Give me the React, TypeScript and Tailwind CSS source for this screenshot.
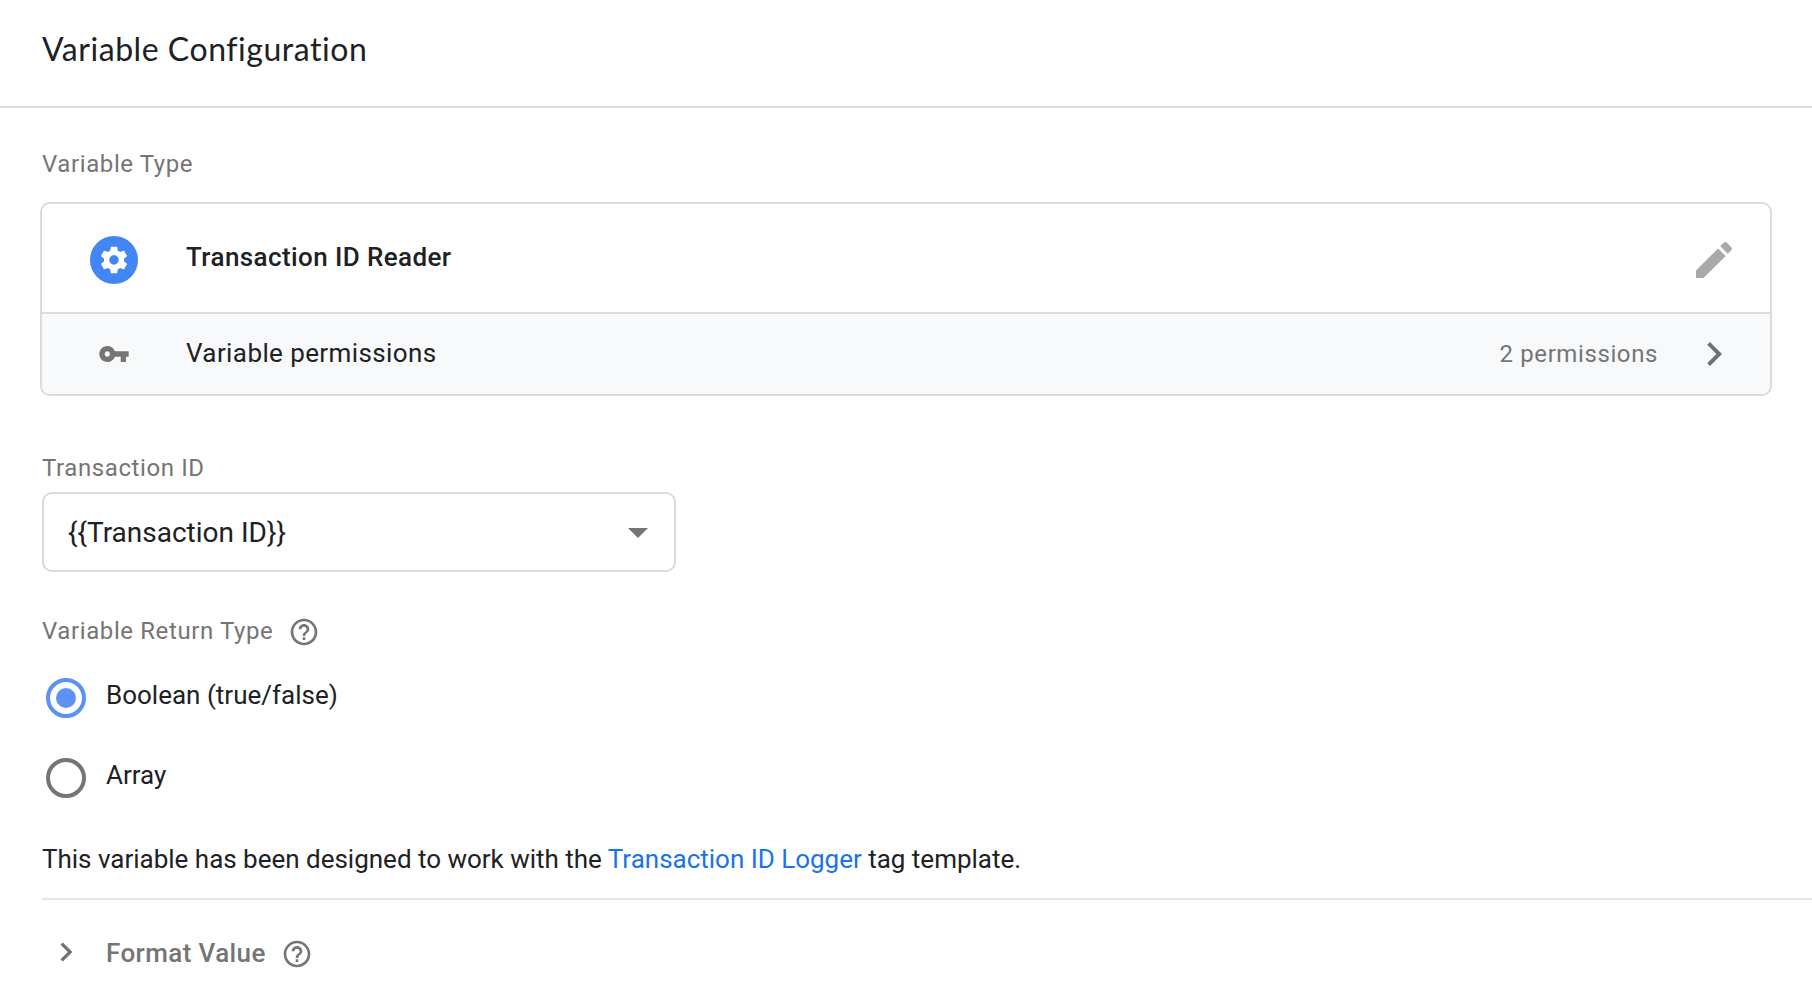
import React from "react";

function Help({ className }: { className: string }) {
  return (
    <svg viewBox="0 0 24 24" className={`h-8 w-8 shrink-0 fill-[#757575] ${className}`}>
      <path d="M11 18h2v-2h-2v2zm1-16C6.480 2 2 6.480 2 12s4.480 10 10 10 10-4.480 10-10S17.520 2 12 2zm0 18c-4.410 0-8-3.590-8-8s3.590-8 8-8 8 3.590 8 8-3.590 8-8 8zm0-14c-2.210 0-4 1.790-4 4h2c0-1.100.9-2 2-2s2 .9 2 2c0 2-3 1.750-3 5h2c0-2.250 3-2.500 3-5 0-2.210-1.790-4-4-4z" />
    </svg>
  );
}

function Chevron({ className }: { className: string }) {
  return (
    <svg viewBox="0 0 24 24" className={`shrink-0 fill-[#6f7072] ${className}`}>
      <path d="M8.590 16.590 13.170 12 8.590 7.410 10 6l6 6-6 6z" />
    </svg>
  );
}

export default function App() {
  return (
    <div className="flex h-[1008px] w-full flex-col overflow-hidden bg-white font-['Roboto',sans-serif] text-[26px] text-[#202124]">
      <header className="flex h-[108px] shrink-0 items-center border-b-2 border-[#dadada] pb-2 pl-[42px]">
        <h1 className="font-['Lato',sans-serif] text-[32px] leading-10 tracking-[0.54px]">Variable Configuration</h1>
      </header>
      <main className="flex flex-col pl-[42px]">
        <div className="mt-[41px] h-[30px] text-2xl leading-[30px] tracking-[0.6px] text-[#757575]">Variable Type</div>
        <section className="-ml-[2px] mt-[23px] mr-10 h-[194px] overflow-hidden rounded-[10px] border-2 border-[#d9dcdf]">
          <div className="flex h-[108px] items-center pl-12 pr-8 pt-1">
            <span className="flex h-12 w-12 items-center justify-center rounded-full bg-[#4285f4]">
              <svg viewBox="0 0 24 24" className="h-8 w-8 fill-white">
                <path d="M19.43 12.98c.04-.32.07-.64.07-.98s-.03-.66-.07-.98l2.11-1.65c.19-.15.24-.42.12-.64l-2-3.46c-.12-.22-.39-.3-.61-.22l-2.49 1c-.52-.4-1.08-.73-1.69-.98l-.38-2.65C14.46 2.18 14.25 2 14 2h-4c-.25 0-.46.18-.49.42l-.38 2.65c-.61.25-1.17.59-1.69.98l-2.49-1c-.23-.09-.49 0-.61.22l-2 3.46c-.13.22-.07.49.12.64l2.11 1.65c-.04.32-.07.65-.07.98s.03.66.07.98l-2.11 1.65c-.19.15-.24.42-.12.64l2 3.46c.12.22.39.3.61.22l2.49-1c.52.4 1.08.73 1.69.98l.38 2.65c.03.24.24.42.49.42h4c.25 0 .46-.18.49-.42l.38-2.65c.61-.25 1.17-.59 1.69-.98l2.49 1c.23.09.49 0 .61-.22l2-3.46c.12-.22.07-.49-.12-.64l-2.11-1.65zM12 15.5c-1.93 0-3.5-1.57-3.5-3.5s1.57-3.5 3.5-3.5 3.5 1.57 3.5 3.5-1.57 3.5-3.5 3.5z" />
              </svg>
            </span>
            <span className="ml-12 pb-1.5 font-medium tracking-[0.4px]">Transaction ID Reader</span>
            <svg viewBox="0 0 24 24" className="ml-auto h-12 w-12 fill-[#a9a9a9]">
              <path d="M3 17.250V21h3.750L17.810 9.940l-3.750-3.750L3 17.250zM20.710 7.040c.39-.39.39-1.020 0-1.410l-2.340-2.340c-.39-.39-1.020-.39-1.410 0l-1.830 1.830 3.750 3.750 1.830-1.830z" />
            </svg>
          </div>
          <div className="flex h-[82px] items-center border-t-2 border-[#d9dcdf] bg-[#f8f9fb] pl-14 pr-8">
            <svg viewBox="0 0 24 24" className="h-8 w-8 fill-[#757575]">
              <path d="M12.650 10C11.830 7.670 9.610 6 7 6c-3.310 0-6 2.690-6 6s2.690 6 6 6c2.610 0 4.830-1.670 5.650-4H17v4h4v-4h2v-4H12.650zM7 14c-1.100 0-2-.9-2-2s.9-2 2-2 2 .9 2 2-.9 2-2 2z" />
            </svg>
            <span className="ml-14 pb-0.5 tracking-[0.4px]">Variable permissions</span>
            <span className="ml-auto text-2xl tracking-[0.6px] text-[#757575]">2 permissions</span>
            <Chevron className="ml-8 h-12 w-12" />
          </div>
        </section>
        <div className="mt-[57px] h-[30px] text-2xl leading-[30px] tracking-[0.6px] text-[#757575]">Transaction ID</div>
        <div className="mt-[9px] flex h-[80px] w-[634px] items-center justify-between rounded-[10px] border-2 border-[#dadada] pl-6 pr-[26px] text-[28px]">
          <span className="pt-0.5">{"{{Transaction ID}}"}</span>
          <svg viewBox="0 0 20 10" className="mt-0.5 h-[10px] w-5 fill-[#757575]"><path d="M0 0h20L10 10z" /></svg>
        </div>
        <div className="mt-[44px] flex h-8 items-center text-2xl tracking-[0.6px] text-[#757575]">
          <span className="pb-0.5">Variable Return Type</span><Help className="ml-[15px]" />
        </div>
        <div className="mt-[30px] flex h-10 items-center pl-1">
          <span className="flex h-10 w-10 items-center justify-center rounded-full border-4 border-[#5b92f3]"><span className="h-5 w-5 rounded-full bg-[#5b92f3]" /></span>
          <span className="ml-5 pb-1.5">Boolean (true/false)</span>
        </div>
        <div className="mt-10 flex h-10 items-center pl-1">
          <span className="h-10 w-10 rounded-full border-4 border-[#757575]" />
          <span className="ml-5 pb-1.5">Array</span>
        </div>
        <p className="mt-[44px] h-[34px] leading-[34px] tracking-[-0.012px]">
          This variable has been designed to work with the <a className="text-[#1a73e8]">Transaction ID Logger</a> tag template.
        </p>
        <div className="mt-[22px] flex h-[110px] items-center border-t-2 border-[#e6e6e6] pl-[5px]">
          <Chevron className="mb-1 h-[38px] w-[38px]" />
          <span className="ml-[21px] pb-0.5 font-medium tracking-[0.4px] text-[#757575]">Format Value</span>
          <Help className="ml-[15px]" />
        </div>
      </main>
    </div>
  );
}
